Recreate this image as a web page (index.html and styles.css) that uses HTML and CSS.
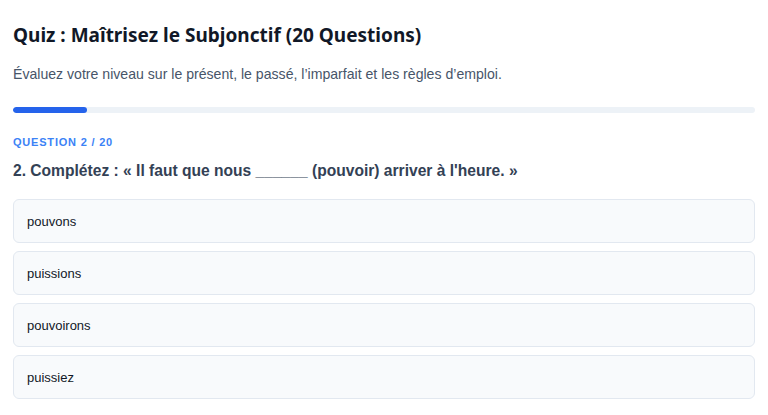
FILE: index.html
```html
<!DOCTYPE html>
<html lang="fr">
<head>
<meta charset="utf-8">
<link rel="stylesheet" href="styles.css">
</head>
<body>
<div class="quiz">
  <h1 class="title">Quiz : Maîtrisez le Subjonctif (20 Questions)</h1>
  <p class="subtitle">Évaluez votre niveau sur le présent, le passé, l’imparfait et les règles d’emploi.</p>
  <div class="progress"><div class="progress-fill" style="width:10%"></div></div>
  <div class="qnum">QUESTION 2 / 20</div>
  <div class="question">2. Complétez : « Il faut que nous ______ (pouvoir) arriver à l'heure. »</div>
  <div class="options">
    <div class="option">pouvons</div>
    <div class="option">puissions</div>
    <div class="option">pouvoirons</div>
    <div class="option">puissiez</div>
  </div>
</div>
</body>
</html>
```
FILE: styles.css
```css
html, body { margin: 0; padding: 0; background: #ffffff; }
body { font-family: "Liberation Sans", Arial, sans-serif; color: #0f172a; }
.quiz { padding: 22px 13px 0 13px; }
.title {
  margin: 0;
  font-family: "Noto Sans", "Open Sans", sans-serif;
  font-size: 19px;
  font-weight: 700;
  line-height: 26px;
  color: #111827;
}
.subtitle {
  margin: 16px 0 0 0;
  font-size: 14.1px;
  line-height: 20px;
  color: #475569;
}
.progress {
  margin-top: 23px;
  height: 6px;
  background: #edf2f7;
  border-radius: 3px;
  overflow: hidden;
}
.progress-fill { height: 100%; background: #2563eb; border-radius: 3px; }
.qnum {
  margin-top: 22px;
  font-size: 11px;
  font-weight: 700;
  letter-spacing: 0.8px;
  color: #3b82f6;
  line-height: 14px;
}
.question {
  margin-top: 11px;
  font-size: 15.6px;
  font-weight: 700;
  line-height: 22px;
  color: #334155;
}
.options { margin-top: 17px; display: flex; flex-direction: column; gap: 8px; }
.option {
  height: 42px;
  display: flex;
  align-items: center;
  padding: 0 13px;
  background: #f8fafc;
  border: 1px solid #e2e8f0;
  border-radius: 6px;
  font-size: 13px;
  color: #111827;
}
```
